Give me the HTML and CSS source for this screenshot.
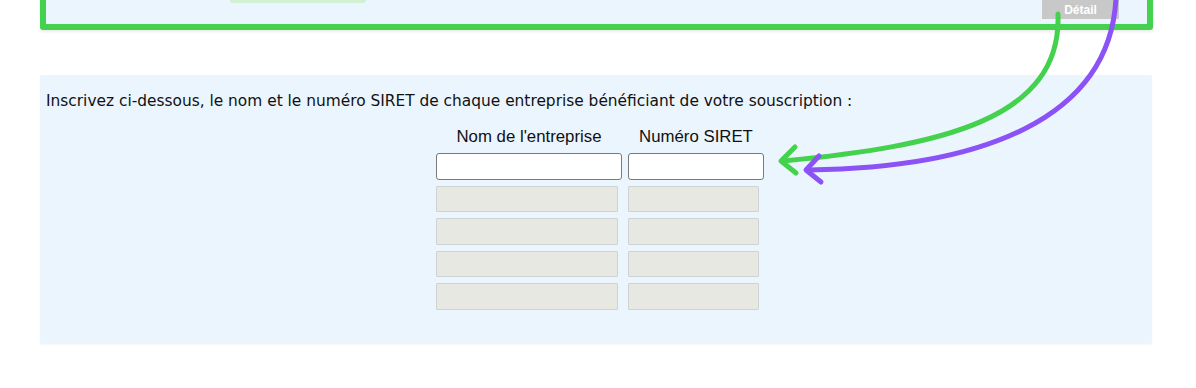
FILE: index.html
```html
<!DOCTYPE html>
<html lang="fr">
<head>
<meta charset="utf-8">
<title>Souscription</title>
<link rel="stylesheet" href="styles.css">
</head>
<body>
<div class="page">
  <div class="top-panel">
    <div class="top-row">
      <div class="stub"></div>
      <button class="detail-btn" type="button">Détail</button>
    </div>
  </div>

  <div class="form-panel">
    <p class="intro">Inscrivez ci-dessous, le nom et le numéro SIRET de chaque entreprise bénéficiant de votre souscription :</p>
    <div class="table-wrap">
      <div class="grid">
        <div class="head">Nom de l'entreprise</div>
        <div class="head">Numéro SIRET</div>
        <input class="field active wide" type="text">
        <input class="field active narrow" type="text">
        <input class="field off wide-off" type="text" disabled>
        <input class="field off narrow-off" type="text" disabled>
        <input class="field off wide-off" type="text" disabled>
        <input class="field off narrow-off" type="text" disabled>
        <input class="field off wide-off" type="text" disabled>
        <input class="field off narrow-off" type="text" disabled>
        <input class="field off wide-off" type="text" disabled>
        <input class="field off narrow-off" type="text" disabled>
      </div>
    </div>
  </div>

  <svg class="arrows" width="1196" height="388" viewBox="0 0 1196 388" xmlns="http://www.w3.org/2000/svg">
    <g fill="none" stroke-width="5" stroke-linecap="round" stroke-linejoin="round">
      <path stroke="#44d14d" d="M1058 14 C1062 120 940 146 783 161"/>
      <path stroke="#44d14d" d="M795 147 L781 161 L796 173"/>
      <path stroke="#8b52f6" d="M1116 -2 C1110 120 980 168 809 170"/>
      <path stroke="#8b52f6" d="M819 156 L806 170 L821 182"/>
    </g>
  </svg>
</div>
</body>
</html>
```

FILE: styles.css
```css
* { box-sizing: border-box; }

html, body {
  margin: 0;
  padding: 0;
  background: #ffffff;
}

.page {
  position: relative;
  width: 1196px;
  height: 388px;
  overflow: hidden;
  font-family: "DejaVu Sans", Verdana, sans-serif;
}

.top-panel {
  margin: -40px 43px 0 40px;
  height: 70px;
  background: #ebf5fe;
  border: 6px solid #44d14d;
  border-radius: 3px;
  box-shadow: 0 2px 3px rgba(0, 0, 0, 0.08);
  display: flex;
  flex-direction: column;
  justify-content: flex-end;
}

.top-row {
  display: flex;
  align-items: flex-start;
  justify-content: space-between;
  padding: 0 28px 5px 184px;
  height: 24px;
}

.stub {
  width: 136px;
  height: 3px;
  background: #d2f0d4;
  border-radius: 0 0 4px 4px;
  filter: blur(0.6px);
}

.detail-btn {
  width: 77px;
  height: 24px;
  margin-top: -5px;
  padding: 5px 0 0;
  border: none;
  background: #c8c8c8;
  color: #ffffff;
  font-family: "Liberation Sans", Arial, sans-serif;
  font-weight: bold;
  font-size: 12px;
  line-height: 14px;
  text-align: center;
}

.form-panel {
  margin: 45px 44px 0 40px;
  background: #ebf5fe;
  border-radius: 2px;
  padding: 17px 0 34px;
  box-shadow: 0 1px 2px rgba(0, 0, 0, 0.04);
}

.intro {
  margin: 0 0 0 6px;
  font-size: 15.4px;
  line-height: 18px;
  color: #111111;
}

.table-wrap {
  display: flex;
  justify-content: center;
  padding-left: 8px;
  margin-top: 17px;
}

.grid {
  display: grid;
  grid-template-columns: 186px 136px;
  grid-template-rows: 20px;
  grid-auto-rows: 26.5px;
  column-gap: 6px;
  row-gap: 6px;
}

.head {
  font-family: "Liberation Sans", Arial, sans-serif;
  font-size: 16.8px;
  line-height: 20px;
  color: #111111;
  text-align: center;
  white-space: nowrap;
}

.field {
  margin: 0;
  padding: 0 4px;
  height: 26.5px;
  font-family: "Liberation Sans", Arial, sans-serif;
  font-size: 13px;
}

.active {
  background: #ffffff;
  border: 1.5px solid #7a7a7a;
  border-radius: 3px;
}

.off {
  background: #e8e8e3;
  border: 1px solid #cfd2d2;
  border-radius: 1px;
}

.wide { width: 186px; }
.narrow { width: 136px; }
.wide-off { width: 182px; }
.narrow-off { width: 131px; }

.arrows {
  position: absolute;
  left: 0;
  top: 0;
  pointer-events: none;
}
```
